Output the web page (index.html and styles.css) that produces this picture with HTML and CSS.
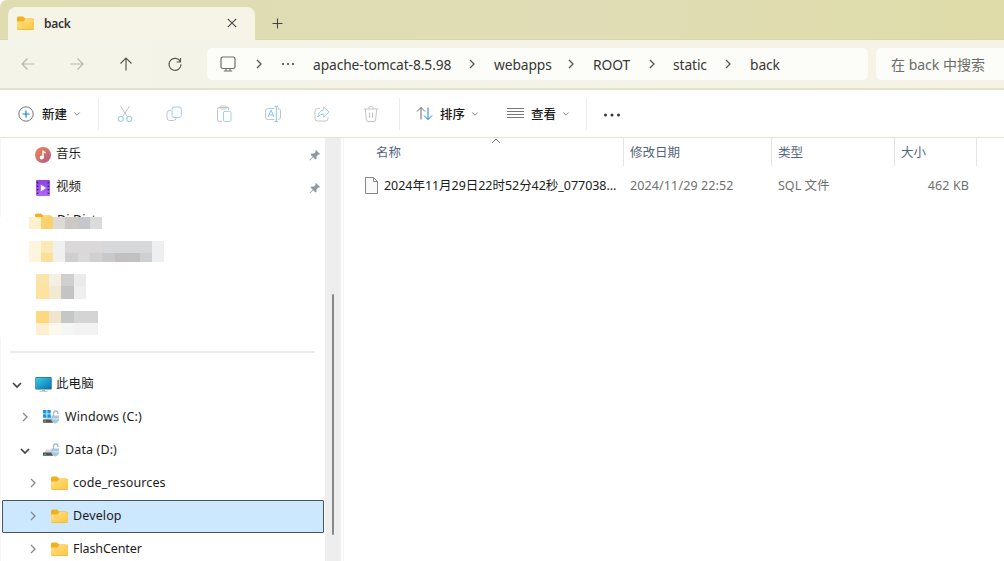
FILE: index.html
```html
<!DOCTYPE html>
<html lang="zh-CN">
<head>
<meta charset="utf-8">
<title>back</title>
<link rel="stylesheet" href="styles.css">
</head>
<body>
<svg class="defs" width="0" height="0">
  <defs>
    <linearGradient id="gFolder" x1="0" y1="0" x2="1" y2="1"><stop offset="0" stop-color="#ffe08a"/><stop offset="1" stop-color="#fbc63c"/></linearGradient>
    <linearGradient id="gMusic" x1="0" y1="0" x2="1" y2="1"><stop offset="0" stop-color="#f08a4b"/><stop offset="1" stop-color="#b2568f"/></linearGradient>
    <linearGradient id="gVideo" x1="0" y1="0" x2="0" y2="1"><stop offset="0" stop-color="#8a45e0"/><stop offset="1" stop-color="#b266f5"/></linearGradient>
    <linearGradient id="gPc" x1="0" y1="0" x2="1" y2="1"><stop offset="0" stop-color="#35d0e0"/><stop offset="1" stop-color="#0f6fb8"/></linearGradient>
  </defs>
  <symbol id="folder" viewBox="0 0 17 15"><path d="M0 2Q0 .5 1.500 .5H6L8 2.500H15.500Q17 2.500 17 4V8H0Z" fill="#f3b01c"/><path d="M0 5.500H6.500L8.500 3H15.500Q17 3 17 4.500V12.500Q17 14 15.500 14H1.500Q0 14 0 12.500Z" fill="url(#gFolder)"/><path d="M.5 13.500H16.500" stroke="#f0b73a" stroke-width=".8"/></symbol>
  <symbol id="right" viewBox="0 0 10 12"><path d="M3 2l4 4-4 4" fill="none" stroke="currentColor" stroke-width="1.300"/></symbol>
  <symbol id="down" viewBox="0 0 12 10"><path d="M2 3l4 4 4-4" fill="none" stroke="currentColor" stroke-width="1.700"/></symbol>
  <symbol id="caret" viewBox="0 0 8 6"><path d="M1.300 1.500L4 4.200l2.700-2.700" fill="none" stroke="currentColor" stroke-width="1"/></symbol>
  <symbol id="pin" viewBox="0 0 12 12"><path d="M7 1l4 4-1 .8-.7-.2-1.800 2v2.200l-1 .8-2.300-2.300L1 11.500l-.5-.5 3.200-3.200L1.500 5.500l1-1H5L6.700 2.700 6.300 1.700z" fill="#8d99a3"/></symbol>
  <symbol id="drive" viewBox="0 0 17 14"><path d="M3 6.500L1 10h9V6.500z" fill="#d5d8da"/><path d="M0 9.500h10v3.300H0z" fill="#50565a"/><path d="M1.300 10.700h1.500v1H1.300z" fill="#4ee06c"/><path d="M10.500 6V3.300q0-2.300 2.200-2.300t2.200 2.300V4" fill="none" stroke="#a5b9c5" stroke-width="1.300"/><path d="M8.500 5.500H16v5q-1.500 2.500-3.700 3-2.800-.7-3.800-3z" fill="#aac8dc"/><path d="M9.500 8H16v1.500H9.500z" fill="#cce2ef"/></symbol>
</svg>
<div class="window">
  <header class="tabstrip">
    <div class="tab">
      <svg class="folder"><use href="#folder"/></svg>
      <span class="tab-title">back</span>
      <svg class="tab-close" viewBox="0 0 10 10"><path d="M.8.800l8.400 8.400M9.200.800L.8 9.200"/></svg>
    </div>
    <svg class="tab-add" viewBox="0 0 11 11"><path d="M5.500.500v10M.5 5.500h10"/></svg>
  </header>
  <nav class="navbar">
    <div class="nav-buttons">
      <svg class="off" viewBox="0 0 16 16"><path d="M14.500 8H2M7.500 2.500L2 8l5.500 5.500"/></svg>
      <svg class="off" viewBox="0 0 16 16"><path d="M1.500 8H14M8.500 2.500L14 8l-5.500 5.500"/></svg>
      <svg viewBox="0 0 16 16"><path d="M8 14.500V2M2.500 7.500L8 2l5.500 5.500"/></svg>
      <svg viewBox="0 0 16 16"><path d="M13.300 5.500A6 6 0 1 0 14 8.200M13.500 2v4H9.500"/></svg>
    </div>
    <div class="address">
      <svg class="monitor" viewBox="0 0 16 16"><rect x="1" y="1" width="14" height="11.500" rx="1.800"/><path d="M6 12.500v2M10 12.500v2M3.800 15h8.400"/></svg>
      <svg class="sep"><use href="#right"/></svg>
      <svg class="dots" viewBox="0 0 14 4"><circle cx="2" cy="2" r="1.100"/><circle cx="7" cy="2" r="1.100"/><circle cx="12" cy="2" r="1.100"/></svg>
      <span class="crumb first">apache-tomcat-8.5.98</span>
      <svg class="sep"><use href="#right"/></svg>
      <span class="crumb">webapps</span>
      <svg class="sep"><use href="#right"/></svg>
      <span class="crumb root">ROOT</span>
      <svg class="sep"><use href="#right"/></svg>
      <span class="crumb static">static</span>
      <svg class="sep"><use href="#right"/></svg>
      <span class="crumb">back</span>
    </div>
    <div class="search">在 back 中搜索</div>
  </nav>
  <div class="toolbar">
    <div class="tool new">
      <svg class="i16" viewBox="0 0 16 16"><circle cx="8" cy="8" r="7.200" stroke="#777"/><path d="M8 4.500v7M4.500 8h7" stroke="#1683d8" stroke-width="1.200"/></svg>
      <span>新建</span><svg class="caret"><use href="#caret"/></svg>
    </div>
    <div class="icons">
      <svg viewBox="0 0 16 18"><path d="M3.500 1l7 11M12.500 1l-7 11" stroke="#c3c5c7"/><circle cx="3.700" cy="14" r="2.600" stroke="#8ac4ee"/><circle cx="12.300" cy="14" r="2.600" stroke="#8ac4ee"/></svg>
      <svg viewBox="0 0 16 18"><path d="M5 5.500H3.500Q1 5.500 1 8v5Q1 15.500 3.500 15.500h4Q10 15.500 10 13" stroke="#c3c5c7"/><rect x="6" y="2" width="9.300" height="10.500" rx="2.200" stroke="#9fcff2"/></svg>
      <svg viewBox="0 0 16 18"><path d="M6 16.300H3Q1.500 16.300 1.500 15V4Q1.500 2.500 3 2.500H12.500V5" stroke="#c3c5c7"/><rect x="4" y="1" width="6.500" height="3" rx="1.200" stroke="#c3c5c7"/><rect x="7.500" y="6.500" width="7.500" height="10" rx="1.300" stroke="#9fcff2"/></svg>
      <svg viewBox="0 0 16 18"><path d="M9.500 14.500H3Q.5 14.500.5 12V6Q.5 3.500 3 3.500H9.500M13 3.500Q15.500 3.500 15.500 6v6q0 2.500-2.500 2.500" stroke="#c3c5c7"/><path d="M3 12l3-7 3 7M4 10h4M11.300 1.500v15M9.500 1.500h3.600M9.500 16.500h3.600" stroke="#8ac4ee"/></svg>
      <svg viewBox="0 0 16 18"><path d="M6 3.500H3.500Q1 3.500 1 6v7.500Q1 16 3.500 16h8q2.500 0 2.500-2.500V12" stroke="#c3c5c7"/><path d="M9.800 2l5.400 5-5.400 5V9Q6 9 3.800 12 4.500 5.500 9.800 5z" stroke="#9fcff2"/></svg>
      <svg viewBox="0 0 16 18"><path d="M.8 4h14.400M5.500 4Q5.500 1.200 8 1.200T10.500 4M2.300 4l1.100 11q.2 1.500 1.600 1.500h6q1.400 0 1.600-1.500L13.700 4M6.500 7.500v5.500M9.500 7.500v5.500" stroke="#c3c5c7"/></svg>
    </div>
    <div class="tool sort">
      <svg class="i17" viewBox="0 0 17 15"><path d="M5 13.500V1.500M1 5.500l4-4 4 4" stroke="#6a6a6a"/><path d="M12 1.500v12M8 9.500l4 4 4-4" stroke="#1683d8"/></svg>
      <span>排序</span><svg class="caret"><use href="#caret"/></svg>
    </div>
    <div class="tool view">
      <svg class="i17" viewBox="0 0 17 15"><path d="M0 2.500h17M0 5.500h17M0 8.500h17M0 11.500h17" stroke="#777"/></svg>
      <span>查看</span><svg class="caret"><use href="#caret"/></svg>
    </div>
    <div class="tool more"><svg viewBox="0 0 18 4"><circle cx="2.500" cy="2" r="1.500"/><circle cx="9" cy="2" r="1.500"/><circle cx="15.500" cy="2" r="1.500"/></svg></div>
  </div>
  <main class="content">
    <aside class="sidebar">
      <div class="row quick"><svg class="i16" viewBox="0 0 16 16"><circle cx="8" cy="8" r="8" fill="url(#gMusic)"/><circle cx="6.700" cy="10.500" r="2" fill="#fff"/><path d="M8 10.500V3.500q.3 1.800 2.700 2.200" fill="none" stroke="#fff" stroke-width="1.400"/></svg><span>音乐</span><svg class="pin"><use href="#pin"/></svg></div>
      <div class="row quick"><svg class="i16" viewBox="0 0 16 16"><rect x="1" width="14" height="16" rx="1" fill="url(#gVideo)"/><path d="M2.700 2v13M13.300 2v13" stroke="#41207c" stroke-width="1.500" stroke-dasharray="1.500 2"/><path d="M5.800 4.500v7L11 8z" fill="#fff"/></svg><span>视频</span><svg class="pin"><use href="#pin"/></svg></div>
      <div class="row quick"><svg class="folder"><use href="#folder"/></svg><span>Di.Dict</span></div>
      <svg class="mosaic" viewBox="0 0 180 120">
        <path fill="#fdf0cf" d="M29 0h12v12H29z"/><path fill="#fad26b" d="M41 0h12v12H41z"/><path fill="#dcdbd8" d="M53 0h12v12H53z"/><path fill="#cec8c5" d="M65 0h13v12H65z"/><path fill="#c5c7cd" d="M78 0h12v12H78z"/><path fill="#dadbdd" d="M90 0h12v12H90z"/>
        <path fill="#fef5df" d="M29 24h12v21H29z"/><path fill="#fde8b8" d="M41 24h12v12H41z"/><path fill="#fddf98" d="M41 36h12v9H41z"/><path fill="#f0f0ef" d="M53 24h12v21H53z"/><path fill="#dad8d9" d="M65 24h50v12H65z"/><path fill="#d6d8d9" d="M102 24h50v12h-50z"/><path fill="#cfcfcf" d="M65 36h13v9H65z"/><path fill="#dad9d9" d="M78 36h12v9H78z"/><path fill="#d2d0ce" d="M90 36h12v9H90z"/><path fill="#c8c9c8" d="M102 36h13v9h-13z"/><path fill="#c3c0c1" d="M115 36h25v9h-25z"/><path fill="#cecfd1" d="M140 36h12v9h-12z"/><path fill="#eeeff1" d="M152 24h12v21h-12z"/>
        <path fill="#fbe4a9" d="M36 57h13v12H36z"/><path fill="#fde2a0" d="M36 69h13v13H36z"/><path fill="#f5f0e2" d="M49 57h12v12H49z"/><path fill="#f2e9d1" d="M49 69h12v13H49z"/><path fill="#cfcfcf" d="M61 57h13v12H61z"/><path fill="#c4c4c5" d="M61 69h13v13H61z"/><path fill="#ebebed" d="M74 57h12v12H74z"/><path fill="#efeff0" d="M74 69h12v13H74z"/>
        <path fill="#fcd97f" d="M36 94h13v12H36z"/><path fill="#f1e6cc" d="M49 94h12v12H49z"/><path fill="#c5c7c6" d="M61 94h13v12H61z"/><path fill="#d4d4d4" d="M74 94h24v12H74z"/><path fill="#fcf0d1" d="M36 106h13v12H36z"/><path fill="#fdf8eb" d="M49 106h12v12H49z"/><path fill="#f4f6f5" d="M61 106h13v12H61z"/><path fill="#f2f2f3" d="M74 106h24v12H74z"/>
      </svg>
      <hr class="divider">
      <div class="row tree l0"><svg class="exp dark"><use href="#down"/></svg><svg class="folder" viewBox="0 0 17 15"><rect x=".3" y="0" width="16.400" height="12.500" rx="1" fill="#176c9a"/><rect x="1" y=".7" width="15" height="11" fill="url(#gPc)"/><path d="M7 12.500h3v1.500H7zM4.500 14h8v.8h-8z" fill="#aebac2"/></svg><span>此电脑</span></div>
      <div class="row tree l1"><svg class="exp"><use href="#right"/></svg><svg class="drive" viewBox="0 0 17 14"><use href="#drive"/><path d="M0 0h3.500v3.500H0zM4.300 0h3.500v3.500H4.300zM0 4.300h3.500v3.500H0zM4.300 4.300h3.500v3.500H4.300z" fill="#1597e5"/></svg><span>Windows (C:)</span></div>
      <div class="row tree l1"><svg class="exp dark"><use href="#down"/></svg><svg class="drive"><use href="#drive"/></svg><span>Data (D:)</span></div>
      <div class="row tree l2"><svg class="exp"><use href="#right"/></svg><svg class="folder"><use href="#folder"/></svg><span>code_resources</span></div>
      <div class="row tree l2 selected"><svg class="exp"><use href="#right"/></svg><svg class="folder"><use href="#folder"/></svg><span>Develop</span></div>
      <div class="row tree l2"><svg class="exp"><use href="#right"/></svg><svg class="folder"><use href="#folder"/></svg><span class="tight">FlashCenter</span></div>
    </aside>
    <div class="scroll"><div class="thumb"></div></div>
    <section class="files">
      <div class="grid head"><div class="name">名称<svg class="asc" viewBox="0 0 10 6"><path d="M1 5l4-4 4 4"/></svg></div><div>修改日期</div><div>类型</div><div>大小</div></div>
      <div class="grid file">
        <div class="name"><svg viewBox="0 0 13 17"><path d="M.5.500h8l4 4v12H.5z" fill="#fafafa"/><path d="M8.500.500v4h4" fill="none"/></svg><span>2024年11月29日22时52分42秒_077038...</span></div>
        <div class="date">2024/11/29 22:52</div><div>SQL 文件</div><div class="size">462 KB</div>
      </div>
    </section>
  </main>
</div>
</body>
</html>
```
FILE: styles.css
```css
* { box-sizing: border-box; }
body { margin: 0; }
.defs { position: absolute; }
svg { display: block; flex: none; }
.window { width: 1004px; height: 561px; overflow: hidden; display: flex; flex-direction: column; background: #fff; font: 12.5px/18px "Noto Sans", "Noto Sans CJK SC", sans-serif; color: #1b1b1b; white-space: nowrap; }
.tabstrip { height: 40px; flex: none; display: flex; padding: 7px 0 0 8px; background: linear-gradient(90deg, #dfdcb2, #e0dcb5 60%, #dfdca9); border-bottom: 1px solid #d9d6ae; border-radius: 7px 0 0; }
.tab { width: 247px; height: 33px; padding: 0 18px 1px 9px; display: flex; align-items: center; background: #f5f4e7; border-radius: 8px 8px 0 0; }
.folder { width: 17px; height: 15px; }
.tab-title { flex: 1; margin: 1px 0 0 10px; font-size: 12px; font-weight: 600; letter-spacing: -.3px; color: #333; }
.tab-close { width: 10px; height: 10px; }
.tab-close, .tab-add { fill: none; stroke: #444; stroke-width: 1.1; }
.tab-add { width: 11px; height: 11px; margin: 11px 0 0 17px; }
.navbar { height: 50px; flex: none; display: flex; padding: 8px 0 0; background: linear-gradient(90deg, #f4f4e8, #f6f2e6); border-bottom: 2px solid #e6e3cd; }
.nav-buttons { width: 207px; height: 32px; padding-left: 19.5px; display: flex; gap: 33.2px; align-items: center; }
.nav-buttons svg { width: 16px; height: 16px; fill: none; stroke: #5a5a56; stroke-width: 1.2; }
.nav-buttons .off { stroke: #b8b8ad; }
.address { width: 661px; height: 32px; display: grid; grid-template-columns: 42px 20px 38px 155px 20px 79px 20px 61px 20px 56px 20px 1fr; align-items: center; background: #fcfdf8; border-radius: 5px; font-size: 13.8px; letter-spacing: -.1px; color: #373737; }
.address svg { justify-self: center; }
.monitor { width: 16px; height: 16px; fill: none; stroke: #6d6d6b; stroke-width: 1.2; }
.sep { width: 10px; height: 12px; color: #555; }
.dots { width: 14px; height: 4px; fill: #444; }
.crumb { padding: 1px 0 0 12px; }
.crumb.first { padding-left: 6px; }
.crumb.static { padding-left: 11px; }
.search { flex: 1; height: 32px; margin-left: 8px; padding-left: 15px; background: #fcfdf8; border-radius: 5px 0 0 5px; font-size: 14px; line-height: 33px; color: #6b6b69; }
.toolbar { height: 48px; flex: none; display: flex; align-items: center; border-bottom: 1px solid #e6e4ce; }
.tool { display: flex; align-items: center; height: 32px; }
.tool svg { fill: none; }
.tool span { margin: 2px 0 0 8px; font-weight: 500; }
.tool .caret { width: 8px; height: 6px; margin-left: 6px; color: #888; }
.i16 { width: 16px; height: 16px; }
.i17 { width: 17px; height: 15px; }
.new { width: 99px; padding-left: 18px; border-right: 1px solid #ececec; }
.icons { width: 301px; height: 32px; display: flex; align-items: center; gap: 33.3px; padding-left: 18px; border-right: 1px solid #ececec; }
.icons svg { width: 16px; height: 18px; fill: none; }
.sort { width: 107px; padding-left: 16px; }
.view { width: 80px; border-right: 1px solid #ececec; }
.sort span, .view span { margin-left: 7px; }
.more { padding: 2px 0 0 16px; }
.tool.more svg { width: 18px; height: 4px; fill: #333; }
.content { flex: 1; min-height: 0; display: flex; }
.sidebar { width: 325px; border-left: 1px solid #f5f5f5; }
.row { height: 33px; display: flex; align-items: center; }
.row span { padding-bottom: 1px; letter-spacing: .12px; }
.row .tight { letter-spacing: -.1px; }
.quick { padding: 0 4px 0 34px; }
.quick span { flex: 1; margin-left: 5px; }
.pin { width: 12px; height: 12px; }
.mosaic { position: relative; width: 180px; height: 120px; margin: -20px 0 14px -1px; background: #fff; shape-rendering: crispEdges; }
.divider { width: 305px; height: 2px; margin: 0 0 15px 9px; border: 0; background: #ececec; }
.tree { margin: 0 1px; }
.tree > svg { margin-bottom: 1px; }
.exp { width: 10px; height: 12px; margin: 0 13px 0 1px; color: #888; }
.exp.dark { width: 12px; height: 10px; margin: 0 12px 0 0; color: #444; }
.l0 { padding-left: 9px; }
.l1 { padding-left: 17px; }
.l2 { padding-left: 25px; }
.l0 span { margin-left: 4px; }
.l2 span { margin-left: 5px; }
.drive { width: 17px; height: 14px; }
.l1 span { margin-left: 5px; }
.selected { background: #cce8ff; border: 1px solid #48545c; padding-left: 24px; border-radius: 1px; }
.scroll { width: 16px; background: #eee; padding: 156px 0 0 7px; }
.thumb { width: 2px; height: 241px; background: #888; border-radius: 1px; }
.files { flex: 1; margin-left: 2px; border-left: 1px solid #f5f5f5; }
.grid { display: grid; grid-template-columns: 280px 148px 123px 82px 1fr; color: #6f6f6f; }
.head { height: 28px; color: #54657d; }
.head > div { padding: 6px 0 0 6px; border-right: 1px solid #e5e5e5; }
.head .name { display: flex; padding-left: 32px; }
.asc { width: 10px; height: 6px; margin: -6px 0 0 90px; fill: none; stroke: #777; }
.file { height: 39px; align-items: center; }
.file > div { padding-left: 6px; }
.file .name { display: flex; align-items: center; gap: 6px; padding-left: 21px; color: #1b1b1b; }
.file .name svg { width: 13px; height: 17px; stroke: #888; margin-bottom: 1px; }
.file .name span { letter-spacing: -.04px; }
.file .date, .file .size { letter-spacing: .12px; }
.file .size { padding: 0 8px 0 0; text-align: right; }
```
